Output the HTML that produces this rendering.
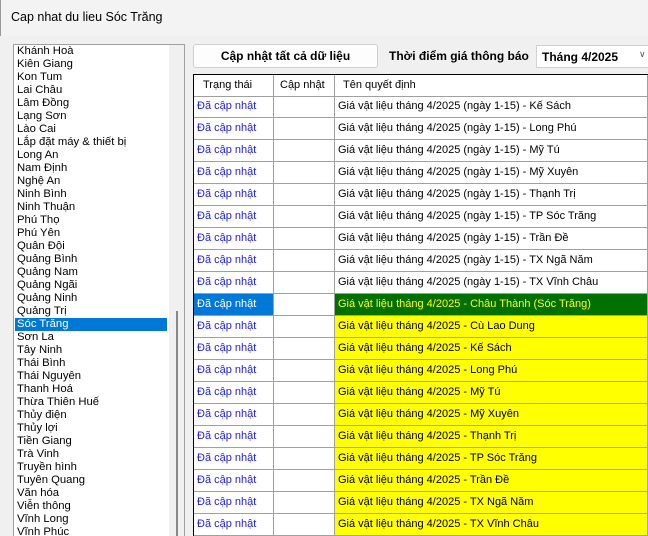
<!DOCTYPE html>
<html style="width:648px;height:536px;overflow:hidden"><head><meta charset="utf-8"><style>
*{margin:0;padding:0;box-sizing:border-box}
body{width:648px;height:536px;overflow:hidden;background:#f0f0f0;font-family:"Liberation Sans",sans-serif;position:relative;font-size:11px;color:#000}
.title{position:absolute;left:0;top:0;width:648px;height:36px;background:#f3f3f3;border-left:1px solid #999}
.title span{position:absolute;left:10px;top:10px;font-size:12.5px}
.list{position:absolute;left:13px;top:44px;width:172px;height:492px;background:#fff;border:1px solid #a0a0a0;border-bottom:none;overflow:hidden}
.list .it{position:absolute;left:3px;height:13px;line-height:13px;font-size:11.3px;white-space:nowrap}
.list .sel{background:#0078d7;color:#fff;left:1px;width:152px;padding-left:2px}
.sb{position:absolute;left:155px;top:0;width:16px;height:500px;background:#f0f0f0}
.thumb{position:absolute;left:162px;top:266px;width:2px;height:240px;background:#888}
.btn{position:absolute;left:193px;top:44px;width:185px;height:24px;background:#fdfdfd;border:1px solid #d0d0d0;border-radius:3px;font-weight:bold;font-size:12px;text-align:center;line-height:22px}
.lbl{position:absolute;left:389px;top:49px;font-weight:bold;font-size:12px}
.combo{position:absolute;left:536px;top:45px;width:120px;height:23px;background:#fff;border:1px solid #d0d0d0;font-weight:bold;font-size:12px;padding:4px 5px}
.combo i{position:absolute;left:102px;top:3px;font-style:normal;font-weight:normal;font-size:9px;color:#555}
.grid{position:absolute;left:193px;top:74px;width:460px;height:470px;background:#fff;border-left:1px solid #000;border-top:1px solid #000}
.row{position:absolute;left:0;height:22px;width:460px}
.c{position:absolute;top:0;height:22px;border-right:1px solid #a0a0a0;border-bottom:1px solid #a0a0a0;line-height:21px;white-space:nowrap;overflow:hidden;font-size:11px}
.c1{left:0;width:80px;padding-left:3px;color:#1a1aff}
.c2{left:80px;width:61px}
.c3{left:141px;width:313px;padding-left:3px}
.h .c{color:#000}
.h .c1{padding-left:9px}
.h .c2{padding-left:6px}
.h .c3{padding-left:8px}
.y{background:#ffff00}
.g{background:#007000;color:#ffff00}
.s{background:#0078d7;color:#fff !important}
</style></head><body>
<div class="title"><span>Cap nhat du lieu Sóc Trăng</span></div>
<div class="list">
<div class="it" style="top:0">Khánh Hoà</div>
<div class="it" style="top:13px">Kiên Giang</div>
<div class="it" style="top:26px">Kon Tum</div>
<div class="it" style="top:39px">Lai Châu</div>
<div class="it" style="top:52px">Lâm Đồng</div>
<div class="it" style="top:65px">Lạng Sơn</div>
<div class="it" style="top:78px">Lào Cai</div>
<div class="it" style="top:91px">Lắp đặt máy &amp; thiết bị</div>
<div class="it" style="top:104px">Long An</div>
<div class="it" style="top:117px">Nam Định</div>
<div class="it" style="top:130px">Nghệ An</div>
<div class="it" style="top:143px">Ninh Bình</div>
<div class="it" style="top:156px">Ninh Thuận</div>
<div class="it" style="top:169px">Phú Thọ</div>
<div class="it" style="top:182px">Phú Yên</div>
<div class="it" style="top:195px">Quân Đội</div>
<div class="it" style="top:208px">Quảng Bình</div>
<div class="it" style="top:221px">Quảng Nam</div>
<div class="it" style="top:234px">Quảng Ngãi</div>
<div class="it" style="top:247px">Quảng Ninh</div>
<div class="it" style="top:260px">Quảng Trị</div>
<div class="it sel" style="top:273px">Sóc Trăng</div>
<div class="it" style="top:286px">Sơn La</div>
<div class="it" style="top:299px">Tây Ninh</div>
<div class="it" style="top:312px">Thái Bình</div>
<div class="it" style="top:325px">Thái Nguyên</div>
<div class="it" style="top:338px">Thanh Hoá</div>
<div class="it" style="top:351px">Thừa Thiên Huế</div>
<div class="it" style="top:364px">Thủy điện</div>
<div class="it" style="top:377px">Thủy lợi</div>
<div class="it" style="top:390px">Tiền Giang</div>
<div class="it" style="top:403px">Trà Vinh</div>
<div class="it" style="top:416px">Truyền hình</div>
<div class="it" style="top:429px">Tuyên Quang</div>
<div class="it" style="top:442px">Văn hóa</div>
<div class="it" style="top:455px">Viễn thông</div>
<div class="it" style="top:468px">Vĩnh Long</div>
<div class="it" style="top:481px">Vĩnh Phúc</div>
<div class="sb"></div><div class="thumb"></div>
</div>
<div class="btn">Cập nhật tất cả dữ liệu</div>
<div class="lbl">Thời điểm giá thông báo</div>
<div class="combo">Tháng 4/2025<i>&#8744;</i></div>
<div class="grid">
<div class="row h" style="top:0"><div class="c c1">Trạng thái</div><div class="c c2">Cập nhật</div><div class="c c3">Tên quyết định</div></div>
<div class="row" style="top:21px"><div class="c c1">Đã cập nhật</div><div class="c c2"></div><div class="c c3">Giá vật liệu tháng 4/2025 (ngày 1-15) - Kế Sách</div></div>
<div class="row" style="top:43px"><div class="c c1">Đã cập nhật</div><div class="c c2"></div><div class="c c3">Giá vật liệu tháng 4/2025 (ngày 1-15) - Long Phú</div></div>
<div class="row" style="top:65px"><div class="c c1">Đã cập nhật</div><div class="c c2"></div><div class="c c3">Giá vật liệu tháng 4/2025 (ngày 1-15) - Mỹ Tú</div></div>
<div class="row" style="top:87px"><div class="c c1">Đã cập nhật</div><div class="c c2"></div><div class="c c3">Giá vật liệu tháng 4/2025 (ngày 1-15) - Mỹ Xuyên</div></div>
<div class="row" style="top:109px"><div class="c c1">Đã cập nhật</div><div class="c c2"></div><div class="c c3">Giá vật liệu tháng 4/2025 (ngày 1-15) - Thạnh Trị</div></div>
<div class="row" style="top:131px"><div class="c c1">Đã cập nhật</div><div class="c c2"></div><div class="c c3">Giá vật liệu tháng 4/2025 (ngày 1-15) - TP Sóc Trăng</div></div>
<div class="row" style="top:153px"><div class="c c1">Đã cập nhật</div><div class="c c2"></div><div class="c c3">Giá vật liệu tháng 4/2025 (ngày 1-15) - Trần Đề</div></div>
<div class="row" style="top:175px"><div class="c c1">Đã cập nhật</div><div class="c c2"></div><div class="c c3">Giá vật liệu tháng 4/2025 (ngày 1-15) - TX Ngã Năm</div></div>
<div class="row" style="top:197px"><div class="c c1">Đã cập nhật</div><div class="c c2"></div><div class="c c3">Giá vật liệu tháng 4/2025 (ngày 1-15) - TX Vĩnh Châu</div></div>
<div class="row" style="top:219px"><div class="c c1 s">Đã cập nhật</div><div class="c c2"></div><div class="c c3 g">Giá vật liệu tháng 4/2025 - Châu Thành (Sóc Trăng)</div></div>
<div class="row" style="top:241px"><div class="c c1">Đã cập nhật</div><div class="c c2"></div><div class="c c3 y">Giá vật liệu tháng 4/2025 - Cù Lao Dung</div></div>
<div class="row" style="top:263px"><div class="c c1">Đã cập nhật</div><div class="c c2"></div><div class="c c3 y">Giá vật liệu tháng 4/2025 - Kế Sách</div></div>
<div class="row" style="top:285px"><div class="c c1">Đã cập nhật</div><div class="c c2"></div><div class="c c3 y">Giá vật liệu tháng 4/2025 - Long Phú</div></div>
<div class="row" style="top:307px"><div class="c c1">Đã cập nhật</div><div class="c c2"></div><div class="c c3 y">Giá vật liệu tháng 4/2025 - Mỹ Tú</div></div>
<div class="row" style="top:329px"><div class="c c1">Đã cập nhật</div><div class="c c2"></div><div class="c c3 y">Giá vật liệu tháng 4/2025 - Mỹ Xuyên</div></div>
<div class="row" style="top:351px"><div class="c c1">Đã cập nhật</div><div class="c c2"></div><div class="c c3 y">Giá vật liệu tháng 4/2025 - Thạnh Trị</div></div>
<div class="row" style="top:373px"><div class="c c1">Đã cập nhật</div><div class="c c2"></div><div class="c c3 y">Giá vật liệu tháng 4/2025 - TP Sóc Trăng</div></div>
<div class="row" style="top:395px"><div class="c c1">Đã cập nhật</div><div class="c c2"></div><div class="c c3 y">Giá vật liệu tháng 4/2025 - Trần Đề</div></div>
<div class="row" style="top:417px"><div class="c c1">Đã cập nhật</div><div class="c c2"></div><div class="c c3 y">Giá vật liệu tháng 4/2025 - TX Ngã Năm</div></div>
<div class="row" style="top:439px"><div class="c c1">Đã cập nhật</div><div class="c c2"></div><div class="c c3 y">Giá vật liệu tháng 4/2025 - TX Vĩnh Châu</div></div>
</div>
</body></html>
